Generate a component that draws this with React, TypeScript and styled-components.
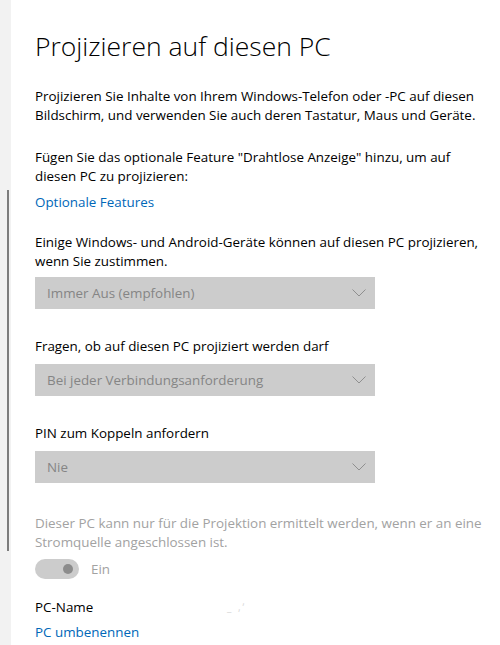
import React from "react";
import styled, { createGlobalStyle } from "styled-components";

const GlobalStyle = createGlobalStyle`
  html, body {
    margin: 0;
    padding: 0;
    background: #ffffff;
  }
  body {
    font-family: "Open Sans", "Liberation Sans", sans-serif;
    -webkit-font-smoothing: antialiased;
  }
`;

const StyledPage = styled("div")`
  display: flex;
  flex-direction: row;
  width: 500px;
  height: 645px;
  overflow: hidden;
`;

const StyledSidebar = styled("div")`
  width: 11px;
  flex-shrink: 0;
  background-color: #f2f2f2;
  display: flex;
  flex-direction: column;
  padding-top: 190px;
  padding-left: 7px;
  box-sizing: border-box;
`;

const StyledScrollThumb = styled("div")`
  width: 2px;
  height: 361px;
  background-color: #7d7d7d;
`;

const StyledContent = styled("div")`
  flex: 1;
  padding: 28px 0 0 24px;
  display: flex;
  flex-direction: column;
  color: #000000;
  font-size: 13.4px;
  line-height: 19px;
`;

const StyledTitle = styled("h1")`
  margin: 0;
  font-family: "Open Sans", "Liberation Sans", sans-serif;
  font-weight: 300;
  font-size: 26.5px;
  line-height: 37px;
  color: #000000;
`;

const StyledText = styled("p")<{ $top: number; $muted?: boolean }>`
  margin: ${(p) => p.$top}px 0 0 0;
  color: ${(p) => (p.$muted ? "#a2a2a2" : "#000000")};
`;

const StyledLink = styled("a")<{ $top: number }>`
  display: block;
  margin-top: ${(p) => p.$top}px;
  color: #0067b8;
  text-decoration: none;
  cursor: pointer;
`;

const StyledSelect = styled("div")<{ $top: number }>`
  margin-top: ${(p) => p.$top}px;
  width: 340px;
  height: 32px;
  box-sizing: border-box;
  padding: 0 9px 0 12px;
  background-color: #cccccc;
  color: #858585;
  display: flex;
  align-items: center;
  justify-content: space-between;
`;

const StyledToggleRow = styled("div")`
  margin-top: 7px;
  display: flex;
  align-items: center;
  gap: 12px;
  color: #a2a2a2;
`;

const StyledToggleTrack = styled("div")`
  width: 44px;
  height: 20px;
  border-radius: 10px;
  background-color: #cccccc;
  display: flex;
  align-items: center;
  justify-content: flex-end;
  padding-right: 6px;
  box-sizing: border-box;
`;

const StyledToggleKnob = styled("div")`
  width: 10px;
  height: 10px;
  border-radius: 50%;
  background-color: #8c8c8c;
`;

const StyledNameRow = styled("div")`
  margin-top: 19px;
  display: flex;
  align-items: center;
`;

const StyledNameLabel = styled("span")`
  width: 192px;
`;

const StyledNameValue = styled("span")`
  color: #d8d8d8;
  font-size: 10px;
  letter-spacing: 2px;
`;

const Chevron: React.FC = () => (
  <svg width="14" height="8" viewBox="0 0 14 8" fill="none">
    <path d="M0.5 0.5 L7 7 L13.5 0.5" stroke="#8f8f8f" strokeWidth="1" />
  </svg>
);

const Select: React.FC<{ value: string; top: number }> = ({ value, top }) => (
  <StyledSelect $top={top}>
    <span>{value}</span>
    <Chevron />
  </StyledSelect>
);

const App: React.FC = () => {
  return (
    <>
      <GlobalStyle />
      <StyledPage>
        <StyledSidebar>
          <StyledScrollThumb />
        </StyledSidebar>
        <StyledContent>
          <StyledTitle>Projizieren auf diesen PC</StyledTitle>
          <StyledText $top={22}>
            Projizieren Sie Inhalte von Ihrem Windows-Telefon oder -PC auf diesen
            Bildschirm, und verwenden Sie auch deren Tastatur, Maus und Geräte.
          </StyledText>
          <StyledText $top={23}>
            Fügen Sie das optionale Feature "Drahtlose Anzeige" hinzu, um auf
            <br />
            diesen PC zu projizieren:
          </StyledText>
          <StyledLink $top={7}>Optionale Features</StyledLink>
          <StyledText $top={21}>
            Einige Windows- und Android-Geräte können auf diesen PC projizieren,
            wenn Sie zustimmen.
          </StyledText>
          <Select top={6} value="Immer Aus (empfohlen)" />
          <StyledText $top={28}>Fragen, ob auf diesen PC projiziert werden darf</StyledText>
          <Select top={8} value="Bei jeder Verbindungsanforderung" />
          <StyledText $top={28}>PIN zum Koppeln anfordern</StyledText>
          <Select top={8} value="Nie" />
          <StyledText $top={31} $muted>
            Dieser PC kann nur für die Projektion ermittelt werden, wenn er an eine
            Stromquelle angeschlossen ist.
          </StyledText>
          <StyledToggleRow>
            <StyledToggleTrack>
              <StyledToggleKnob />
            </StyledToggleTrack>
            <span>Ein</span>
          </StyledToggleRow>
          <StyledNameRow>
            <StyledNameLabel>PC-Name</StyledNameLabel>
            <StyledNameValue>_ ,ʼ</StyledNameValue>
          </StyledNameRow>
          <StyledLink $top={6}>PC umbenennen</StyledLink>
        </StyledContent>
      </StyledPage>
    </>
  );
};

export default App;
